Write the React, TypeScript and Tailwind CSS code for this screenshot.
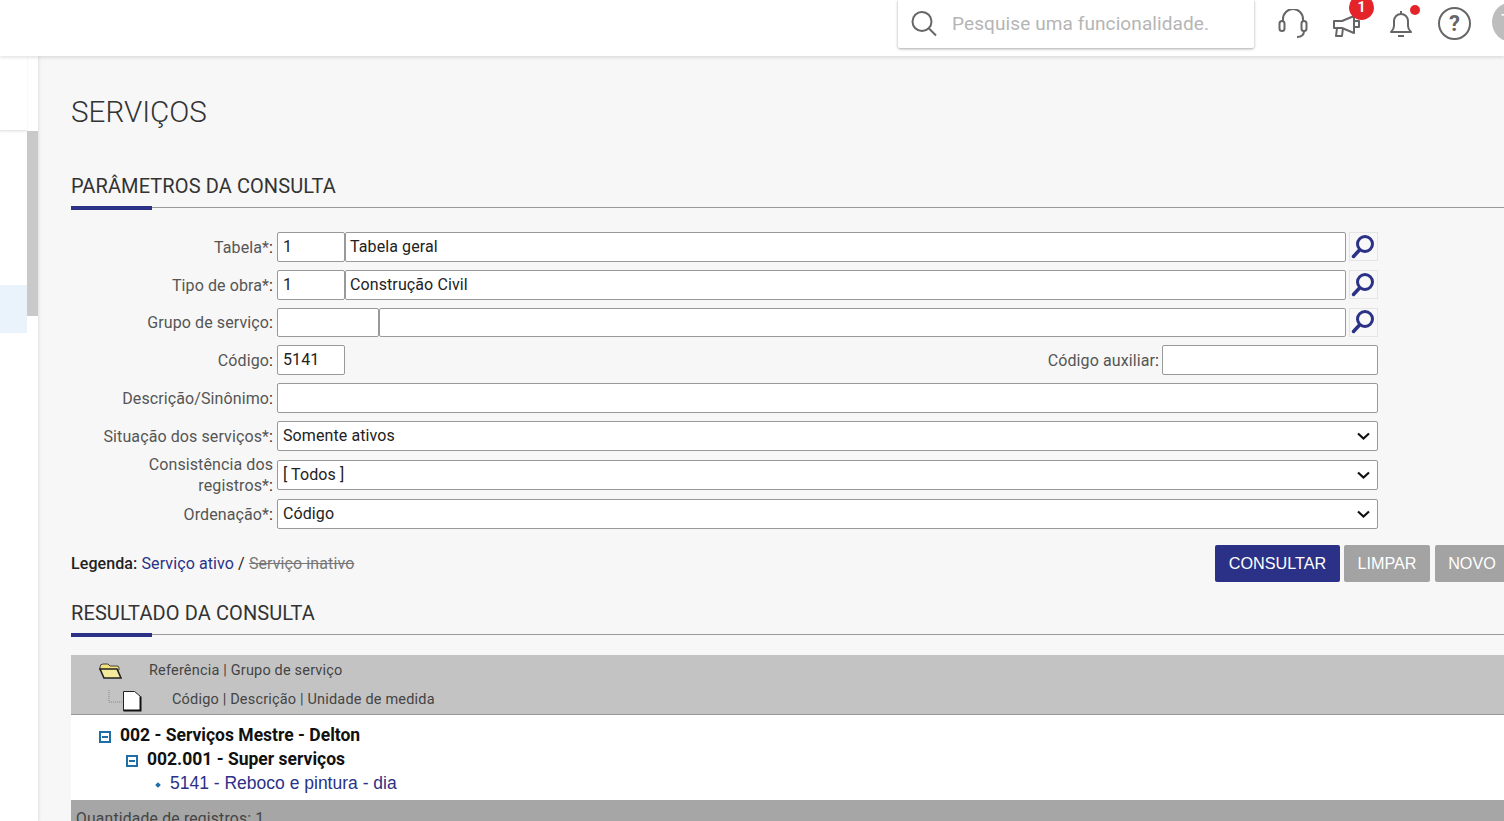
const roboto = "font-['Roboto',sans-serif]";
const arial = "font-['Liberation_Sans',Arial,sans-serif]";

function TopIcons() {
  return (
    <div className="ml-[24px] flex items-start">
      <svg width="30" height="30" viewBox="0 0 30 30" fill="none" stroke="#666" strokeWidth="2" className="mt-[9px]">
        <path d="M5 13v-3a10 10 0 0 1 20 0v3" />
        <rect x="1.500" y="12" width="5" height="10" rx="2.500" />
        <rect x="23.500" y="12" width="5" height="10" rx="2.500" />
        <path d="M26 22c0 4-3 6-7 6" />
      </svg>
      <div className="relative ml-[24px] mt-[14px]">
        <svg width="30" height="24" viewBox="0 0 30 24" fill="none" stroke="#666" strokeWidth="2" strokeLinejoin="round">
          <path d="M2 7h8l12-5v17L10 14H2z" />
          <path d="M5 14l-1 8h6l1-8" />
          <path d="M22 7h5v6h-5" />
        </svg>
        <span className="absolute left-[17px] top-[-19px] flex h-[25px] w-[25px] items-center justify-center rounded-full bg-[#e5242a] text-[14px] font-bold text-white">
          1
        </span>
      </div>
      <div className="relative ml-[27px] mt-[10px]">
        <svg width="24" height="28" viewBox="0 0 24 28" fill="none" stroke="#666" strokeWidth="2" strokeLinejoin="round">
          <path d="M2 22c2-2 3-3 3-6v-5a7 7 0 0 1 14 0v5c0 3 1 4 3 6z" />
          <path d="M12 1v3" />
          <path d="M9 26h6" />
        </svg>
        <span className="absolute left-[21px] top-[-5px] h-[10px] w-[10px] rounded-full bg-[#e5242a]" />
      </div>
      <div className="ml-[25px] mt-[7px] flex h-[33px] w-[33px] items-center justify-center rounded-full border-2 border-[#666] text-[22px] font-bold leading-none text-[#666]">
        ?
      </div>
      <div className="ml-[21px] mt-[2px] flex h-[40px] w-[40px] shrink-0 items-center justify-start rounded-full bg-[#bdbdbd] pl-[9px] text-[20px] text-white">
        T
      </div>
    </div>
  );
}

function Lookup() {
  return (
    <button className="ml-[3px] flex h-[29px] w-[29px] shrink-0 items-center justify-center border border-[#e4e4e4] bg-[#f8f8f8]">
      <svg width="26" height="26" viewBox="1 0 26 26" fill="none" stroke="#2b3186" strokeLinecap="round">
        <circle cx="15" cy="10" r="7.500" strokeWidth="3" />
        <path d="M9.500 16 3.500 22.500" strokeWidth="3.500" />
      </svg>
    </button>
  );
}

function TextInput({ value, className }: { value?: string; className: string }) {
  return (
    <div
      className={`flex h-full items-center rounded-[2px] border border-[#999] bg-white text-[16px] tracking-[0.1px] text-[#222] ${className}`}
    >
      {value}
    </div>
  );
}

function Select({ value }: { value: string }) {
  return (
    <div className="flex h-full flex-1 items-center justify-between rounded-[2px] border border-[#999] bg-white pl-[5px] pr-[7px] text-[16px] tracking-[0.1px] text-[#222]">
      {value}
      <svg width="13" height="8" viewBox="0 0 13 8" fill="none" stroke="#111" strokeWidth="2.200">
        <path d="M1 1.500 6.500 6.500 12 1.500" />
      </svg>
    </div>
  );
}

function Row({ label, children, className = "h-[29.8px]" }: { label: React.ReactNode; children: React.ReactNode; className?: string }) {
  return (
    <div className={`flex items-center ${className}`}>
      <label className="mt-[1px] w-[202px] shrink-0 text-right text-[16px] leading-[21px] tracking-[0.1px] text-[#555]">
        {label}
        <span className="text-[#222]">:</span>
      </label>
      <div className="ml-[4px] flex h-full min-w-0 flex-1 items-center">{children}</div>
    </div>
  );
}

function SectionTitle({ children }: { children: React.ReactNode }) {
  return (
    <div className="relative border-b border-[#999] pb-[7px]">
      <h2 className="text-[20px] leading-[28px] tracking-[0.1px] text-[#333]">{children}</h2>
      <span className="absolute bottom-[-3px] left-0 h-[4px] w-[81px] bg-[#2b3186]" />
    </div>
  );
}

function Minus() {
  return (
    <span className="flex h-[12px] w-[12px] shrink-0 items-center justify-center border-2 border-[#1f6ea8]">
      <span className="h-[2px] w-[6px] bg-[#1f6ea8]" />
    </span>
  );
}

export default function App() {
  return (
    <div className={`flex h-[821px] w-[1504px] flex-col overflow-hidden bg-[#f7f7f7] ${roboto}`}>
      <header className="relative z-20 flex h-[56px] shrink-0 items-start bg-white pl-[898px] shadow-[0_1px_4px_rgba(0,0,0,0.15)]">
        <div className="flex h-[48px] w-[356px] shrink-0 items-center rounded-b-[2px] bg-white pl-[12px] shadow-[0_1px_3px_rgba(0,0,0,0.35)]">
          <svg width="28" height="28" viewBox="0 0 28 28" fill="none" stroke="#666" strokeWidth="2">
            <circle cx="12" cy="11.500" r="9.500" />
            <path d="m19 18.500 7 7" />
          </svg>
          <span className="ml-[14px] text-[19px] tracking-[0.1px] text-[#b5b5b5]">Pesquise uma funcionalidade.</span>
        </div>
        <TopIcons />
      </header>

      <div className="flex min-h-0 flex-1">
        <aside className="relative z-10 flex w-[38px] shrink-0 bg-white shadow-[1px_0_3px_rgba(0,0,0,0.1)]">
          <div className="flex w-[27px] flex-col">
            <div className="h-[75px] shrink-0 border-b border-[#e8e8e8] shadow-[0_1px_2px_rgba(0,0,0,0.08)]" />
            <div className="mt-[154px] h-[48px] bg-[#eaf2fb]" />
          </div>
          <div className="mt-[75px] h-[185px] w-[11px] bg-[#c9c9c9]" />
        </aside>

        <main className="min-w-0 flex-1 pl-[33px]">
          <h1 className="mt-[39px] text-[29.6px] font-light leading-[34px] text-[#333]">SERVIÇOS</h1>

          <div className="mt-[43px] w-[1433px]">
            <SectionTitle>PARÂMETROS DA CONSULTA</SectionTitle>
          </div>

          <form className="mt-[24px] flex w-[1307px] flex-col gap-[8px]">
            <Row label="Tabela*">
              <TextInput value="1" className="w-[68px] px-[5px]" />
              <TextInput value="Tabela geral" className="flex-1 px-[4px]" />
              <Lookup />
            </Row>
            <Row label="Tipo de obra*">
              <TextInput value="1" className="w-[68px] px-[5px]" />
              <TextInput value="Construção Civil" className="flex-1 px-[4px]" />
              <Lookup />
            </Row>
            <Row label="Grupo de serviço">
              <TextInput className="w-[102px]" />
              <TextInput className="flex-1" />
              <Lookup />
            </Row>
            <Row label="Código">
              <TextInput value="5141" className="w-[68px] px-[5px]" />
              <span className="ml-auto mt-[1px] text-[16px] tracking-[0.1px] text-[#555]">
                Código auxiliar<span className="text-[#222]">:</span>
              </span>
              <TextInput className="ml-[3px] w-[216px]" />
            </Row>
            <Row label="Descrição/Sinônimo">
              <TextInput className="flex-1" />
            </Row>
            <Row label="Situação dos serviços*">
              <Select value="Somente ativos" />
            </Row>
            <Row label={<>Consistência dos<br />registros*</>} className="mt-[1.2px] h-[29.6px]">
              <Select value="[ Todos ]" />
            </Row>
            <Row label="Ordenação*" className="mt-[1.5px] h-[29.6px]">
              <Select value="Código" />
            </Row>
          </form>

          <div className="mt-[16px] flex h-[37px] w-[1438px] items-center justify-between">
            <p className="mt-[1px] text-[16px] tracking-[0.1px] text-[#222]">
              <b className="font-medium">Legenda:</b> <span className="text-[#2b3186]">Serviço ativo</span> /{" "}
              <span className="text-[#777] line-through">Serviço inativo</span>
            </p>
            <div className={`flex text-[16.2px] text-white ${arial}`}>
              <button className="h-[37px] w-[125px] rounded-[2px] bg-[#2b3186]">CONSULTAR</button>
              <button className="ml-[4px] h-[37px] w-[86px] rounded-[2px] bg-[#a3a3a3]">LIMPAR</button>
              <button className="ml-[5px] h-[37px] w-[74px] rounded-[2px] bg-[#a3a3a3]">NOVO</button>
            </div>
          </div>

          <div className="mt-[17px] w-[1433px]">
            <SectionTitle>RESULTADO DA CONSULTA</SectionTitle>
          </div>

          <section className="mt-[20px] w-[1433px]">
            <div className="h-[60px] border-b border-[#999] bg-[#c3c3c3] text-[14.5px] tracking-[0.18px] text-[#444]">
              <div className="flex h-[30px] items-center pl-[28px] pt-[3px]">
                <svg width="23" height="18" viewBox="0 0 23 18">
                  <path d="M1 5q0-3 3-3h5l2 2h7q2 0 2 2v2H1z" fill="#f3e27a" stroke="#444" />
                  <path d="M1 7h17l4 9H5z" fill="#f5ea9c" stroke="#222" strokeWidth="1.600" />
                </svg>
                <span className="ml-[27px]">Referência | Grupo de serviço</span>
              </div>
              <div className="flex h-[29px] items-center pl-[37px] pt-[2px]">
                <svg width="34" height="24" viewBox="0 0 34 24" fill="none">
                  <path d="M1 2v12h14" stroke="#888" strokeDasharray="1 1" />
                  <path d="M15.500 3.500h11l6 5v14h-17z" fill="#fff" stroke="#222" />
                  <path d="M32.500 8.500v14h-17" stroke="#111" strokeWidth="2" />
                </svg>
                <span className="ml-[30px]">Código | Descrição | Unidade de medida</span>
              </div>
            </div>
            <div className="flex h-[85px] flex-col bg-white pt-[8px]">
              <div className="flex h-[24px] items-center pl-[28px]">
                <span className="mt-[5px]"><Minus /></span>
                <span className="ml-[9px] text-[17.5px] font-bold text-[#111]">002 - Serviços Mestre - Delton</span>
              </div>
              <div className="flex h-[24px] items-center pl-[55px]">
                <span className="mt-[5px]"><Minus /></span>
                <span className="ml-[9px] text-[17.5px] font-bold text-[#111]">002.001 - Super serviços</span>
              </div>
              <div className={`flex h-[24px] items-center pl-[85px] text-[17.5px] text-[#2b3186] ${arial}`}>
                <span className="mt-[4px] h-[4px] w-[4px] rotate-45 bg-[#1f6ea8]" />
                <span className="ml-[10px]">5141 - Reboco e pintura - dia</span>
              </div>
            </div>
            <div className="h-[40px] bg-[#a6a6a6] pl-[5px] pt-[7px] text-[15.7px] tracking-[0.2px] text-[#444]">
              Quantidade de registros: 1
            </div>
          </section>
        </main>
      </div>
    </div>
  );
}
